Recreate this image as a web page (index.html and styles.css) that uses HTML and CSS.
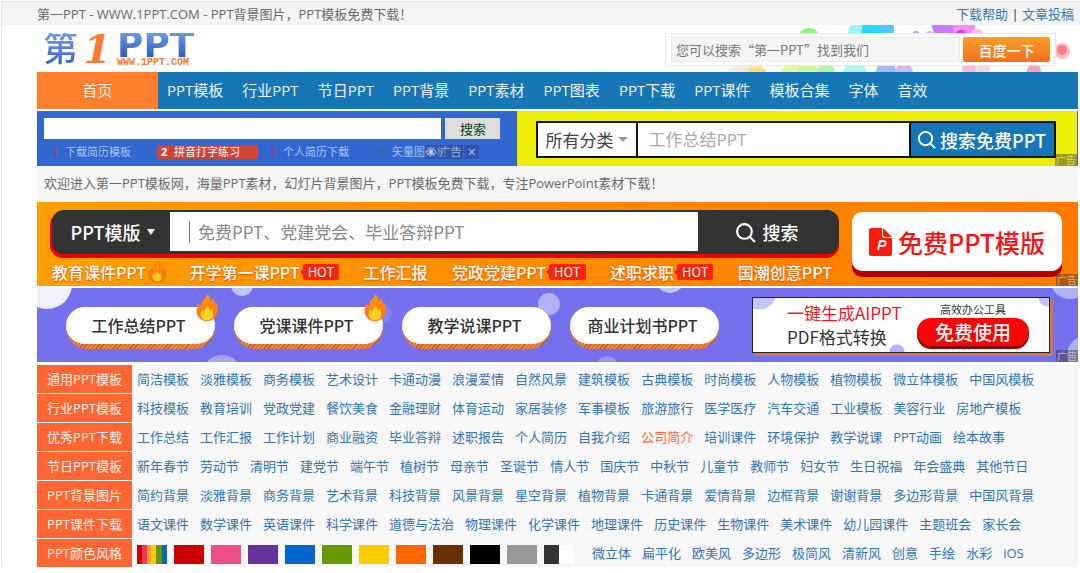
FILE: index.html
```
<!DOCTYPE html>
<html lang="zh-Hans">
<head>
  <meta charset="UTF-8">
  <title>第一PPT - PPT模板免费下载</title>
  <link rel="stylesheet" href="styles.css">
</head>
<body>
  <svg class="defs" width="0" height="0" aria-hidden="true">
    <defs>
      <linearGradient id="flameFill" x1="0" y1="0" x2="0" y2="1">
        <stop offset="0" stop-color="#ff9c00"/>
        <stop offset="1" stop-color="#ff6a1a"/>
      </linearGradient>
      <symbol id="flame" viewBox="0 0 24 30">
        <path fill="url(#flameFill)" d="M12 0c3 3 4 6 4 9 1-1 2-3 2-5 2 3 2 5 2 7l2-2c2 5 2 8 1 12-1 5-5 9-11 9S2 26 1 21c-1-4 0-7 2-10l2 4c0-4 1-6 3-8 2-2 4-4 4-7z"/>
        <path fill="#ffd21f" d="M13 13c1 3 2 4 2 6l2-3c2 3 2 5 2 7 0 4-3 6-7 6s-7-2-7-6c0-2 1-4 2-6l2 3c0-3 2-5 4-7z"/>
      </symbol>
      <symbol id="search" viewBox="0 0 20 20">
        <circle cx="9" cy="9" r="7" fill="none" stroke="currentColor" stroke-width="2"/>
        <path d="M14 14l5 5" stroke="currentColor" stroke-width="2"/>
      </symbol>
    </defs>
  </svg>

  <div class="topbar">
    <span>第一PPT - WWW.1PPT.COM - PPT背景图片，PPT模板免费下载！</span>
    <div class="topbar-links"><a href="#">下载帮助</a> | <a href="#">文章投稿</a></div>
  </div>

  <header>
    <a class="logo" href="#">
      <span class="logo-di">第</span>
      <span class="logo-one">1</span>
      <span class="logo-right">
        <span class="logo-ppt">PPT</span>
        <span class="logo-url">WWW.1PPT.COM</span>
      </span>
    </a>
    <svg class="bubbles" width="410" height="47" viewBox="-100 0 410 47" aria-hidden="true">
      <circle cx="39" cy="14" r="11" fill="#8df57d"/>
      <circle cx="90" cy="8" r="12" fill="#9ff5f3"/>
      <circle cx="108" cy="4" r="16" fill="#55c8fb"/>
      <circle cx="101" cy="8" r="10" fill="#25d8f5"/>
      <circle cx="146" cy="10" r="4" fill="#b5a5f5"/>
      <circle cx="160" cy="12" r="6" fill="#c9baf8"/>
      <circle cx="176" cy="0" r="14" fill="#c77dfb"/>
      <circle cx="194" cy="2" r="11" fill="#f68ef2"/>
      <circle cx="191" cy="11" r="6" fill="#f02be0"/>
      <circle cx="207" cy="11" r="7" fill="#f9c3dc"/>
      <circle cx="236" cy="14" r="5" fill="#fde6e6"/>
      <circle cx="292" cy="26" r="8" fill="#fdbcbc"/>
      <circle cx="292" cy="25" r="5" fill="#fb7d85"/>
      <ellipse cx="-30" cy="47" rx="12" ry="6" fill="#fbe9dc"/>
      <circle cx="-18" cy="49" r="8" fill="#fde6b0"/>
      <circle cx="-12" cy="50" r="9" fill="#ffe070"/>
      <circle cx="22" cy="52" r="13" fill="#e6f99a"/>
      <circle cx="38" cy="50" r="12" fill="#d0f99a"/>
      <circle cx="56" cy="47" r="9" fill="#b5f5b0"/>
      <circle cx="85" cy="49" r="12" fill="#aef5f3"/>
      <circle cx="116" cy="46" r="10" fill="#a9b5f8"/>
      <circle cx="134" cy="47" r="9" fill="#cdb8f8"/>
      <circle cx="199" cy="44" r="7" fill="#f8bcd0"/>
      <circle cx="213" cy="44" r="7" fill="#fbd5dc"/>
      <circle cx="264" cy="46" r="7" fill="#f8a5b5"/>
    </svg>
    <form class="baidu">
      <input type="text" aria-label="百度搜索" value="您可以搜索“第一PPT”找到我们">
      <button type="button">百度一下</button>
    </form>
  </header>

  <main>
    <nav class="nav">
      <a class="home" href="#">首页</a>
      <a href="#">PPT模板</a>
      <a href="#">行业PPT</a>
      <a href="#">节日PPT</a>
      <a href="#">PPT背景</a>
      <a href="#">PPT素材</a>
      <a href="#">PPT图表</a>
      <a href="#">PPT下载</a>
      <a href="#">PPT课件</a>
      <a href="#">模板合集</a>
      <a href="#">字体</a>
      <a href="#">音效</a>
    </nav>

    <div class="ads">
      <section class="ad-blue">
        <form class="ad-blue-form">
          <input type="text" aria-label="搜索">
          <button type="button">搜索</button>
        </form>
        <div class="hot-words">
          <a href="#"><b>1</b>下载简历模板</a>
          <a class="on" href="#"><b>2</b>拼音打字练习</a>
          <a href="#"><b>3</b>个人简历下载</a>
          <a href="#"><b class="green">4</b>矢量图素材</a>
        </div>
        <div class="ad-close">
          <svg width="12" height="12" viewBox="0 0 12 12" aria-hidden="true">
            <path d="M1 6c2-4 8-4 10 0-2 4-8 4-10 0z" fill="none" stroke="#c3d0f5"/>
            <circle cx="6" cy="6" r="2" fill="#c3d0f5"/>
          </svg>
          <span>广告</span>
          <button type="button" aria-label="关闭">✕</button>
        </div>
      </section>
      <section class="ad-yellow">
        <form class="yellow-form">
          <button class="yellow-type" type="button">所有分类<i class="caret"></i></button>
          <input type="text" aria-label="关键词" placeholder="工作总结PPT">
          <button class="yellow-go" type="button"><svg width="19" height="19"><use href="#search"/></svg>搜索免费PPT</button>
        </form>
        <span class="ad-mark">广告</span>
      </section>
    </div>

    <p class="welcome">欢迎进入第一PPT模板网，海量PPT素材，幻灯片背景图片，PPT模板免费下载，专注PowerPoint素材下载！</p>

    <section class="ad-orange">
      <div class="orange-main">
        <form class="orange-form">
          <button class="orange-type" type="button">PPT模版<i class="caret"></i></button>
          <div class="orange-input">
            <input type="text" aria-label="搜索模板" placeholder="免费PPT、党建党会、毕业答辩PPT">
          </div>
          <button class="orange-go" type="button"><svg width="21" height="21"><use href="#search"/></svg>搜索</button>
        </form>
        <div class="orange-links">
          <a href="#">教育课件PPT<svg width="16" height="20"><use href="#flame"/></svg></a>
          <a href="#">开学第一课PPT<span class="hot">HOT</span></a>
          <a href="#">工作汇报</a>
          <a href="#">党政党建PPT<span class="hot">HOT</span></a>
          <a href="#">述职求职<span class="hot">HOT</span></a>
          <a href="#">国潮创意PPT</a>
        </div>
      </div>
      <a class="free-btn" href="#">
        <svg width="23" height="28" viewBox="0 0 23 28" aria-hidden="true">
          <path d="M2 0h11v8c0 1 1 2 2 2h8v16c0 1-1 2-2 2H2c-1 0-2-1-2-2V2C0 1 1 0 2 0z" fill="#fa1b0a"/>
          <path d="M14 0l9 9h-7c-1 0-2-1-2-2z" fill="#fa1b0a"/>
          <path d="M9 22l2-9h3c4 0 3 5 0 5h-3" fill="none" stroke="#fff" stroke-width="2"/>
        </svg>
        免费PPT模版
      </a>
      <span class="ad-mark">广告</span>
    </section>

    <section class="ad-purple">
      <svg class="dots" width="1041" height="74" viewBox="0 0 1041 74" aria-hidden="true">
        <circle cx="10" cy="-4" r="25" fill="#f0f1fc"/>
        <circle cx="205" cy="-3" r="11" fill="#c3c2f8"/>
        <circle cx="185" cy="87" r="20" fill="#a9a7f5"/>
        <circle cx="346" cy="26" r="9" fill="#8683f0"/>
        <circle cx="512" cy="16" r="11" fill="#b3b1f8"/>
        <circle cx="633" cy="-10" r="15" fill="#c3c2f8"/>
        <circle cx="570" cy="79" r="11" fill="#9694f3"/>
        <circle cx="1033" cy="-9" r="20" fill="#b0b4f5"/>
        <circle cx="1049" cy="67" r="19" fill="#a5b5f5"/>
      </svg>
      <div class="pills">
        <a href="#">工作总结PPT<svg width="22" height="29"><use href="#flame"/></svg></a>
        <a href="#">党课课件PPT<svg width="22" height="29"><use href="#flame"/></svg></a>
        <a href="#">教学说课PPT</a>
        <a href="#">商业计划书PPT</a>
      </div>
      <div class="ai-box">
        <div class="ai-text">
          <span class="red">一键生成AIPPT</span>
          <span>PDF格式转换</span>
        </div>
        <div class="ai-action">
          <span>高效办公工具</span>
          <button type="button">免费使用</button>
        </div>
      </div>
      <span class="ad-mark">广告</span>
    </section>

    <div class="cats">
      <div class="row">
        <h2>通用PPT模板</h2>
        <div class="links">
          <a href="#">简洁模板</a><a href="#">淡雅模板</a><a href="#">商务模板</a><a href="#">艺术设计</a><a href="#">卡通动漫</a><a href="#">浪漫爱情</a><a href="#">自然风景</a><a href="#">建筑模板</a><a href="#">古典模板</a><a href="#">时尚模板</a><a href="#">人物模板</a><a href="#">植物模板</a><a href="#">微立体模板</a><a href="#">中国风模板</a>
        </div>
      </div>
      <div class="row">
        <h2>行业PPT模板</h2>
        <div class="links">
          <a href="#">科技模板</a><a href="#">教育培训</a><a href="#">党政党建</a><a href="#">餐饮美食</a><a href="#">金融理财</a><a href="#">体育运动</a><a href="#">家居装修</a><a href="#">军事模板</a><a href="#">旅游旅行</a><a href="#">医学医疗</a><a href="#">汽车交通</a><a href="#">工业模板</a><a href="#">美容行业</a><a href="#">房地产模板</a>
        </div>
      </div>
      <div class="row">
        <h2>优秀PPT下载</h2>
        <div class="links">
          <a href="#">工作总结</a><a href="#">工作汇报</a><a href="#">工作计划</a><a href="#">商业融资</a><a href="#">毕业答辩</a><a href="#">述职报告</a><a href="#">个人简历</a><a href="#">自我介绍</a><a class="active" href="#">公司简介</a><a href="#">培训课件</a><a href="#">环境保护</a><a href="#">教学说课</a><a href="#">PPT动画</a><a href="#">绘本故事</a>
        </div>
      </div>
      <div class="row">
        <h2>节日PPT模板</h2>
        <div class="links">
          <a href="#">新年春节</a><a href="#">劳动节</a><a href="#">清明节</a><a href="#">建党节</a><a href="#">端午节</a><a href="#">植树节</a><a href="#">母亲节</a><a href="#">圣诞节</a><a href="#">情人节</a><a href="#">国庆节</a><a href="#">中秋节</a><a href="#">儿童节</a><a href="#">教师节</a><a href="#">妇女节</a><a href="#">生日祝福</a><a href="#">年会盛典</a><a href="#">其他节日</a>
        </div>
      </div>
      <div class="row">
        <h2>PPT背景图片</h2>
        <div class="links">
          <a href="#">简约背景</a><a href="#">淡雅背景</a><a href="#">商务背景</a><a href="#">艺术背景</a><a href="#">科技背景</a><a href="#">风景背景</a><a href="#">星空背景</a><a href="#">植物背景</a><a href="#">卡通背景</a><a href="#">爱情背景</a><a href="#">边框背景</a><a href="#">谢谢背景</a><a href="#">多边形背景</a><a href="#">中国风背景</a>
        </div>
      </div>
      <div class="row">
        <h2>PPT课件下载</h2>
        <div class="links">
          <a href="#">语文课件</a><a href="#">数学课件</a><a href="#">英语课件</a><a href="#">科学课件</a><a href="#">道德与法治</a><a href="#">物理课件</a><a href="#">化学课件</a><a href="#">地理课件</a><a href="#">历史课件</a><a href="#">生物课件</a><a href="#">美术课件</a><a href="#">幼儿园课件</a><a href="#">主题班会</a><a href="#">家长会</a>
        </div>
      </div>
      <div class="row">
        <h2>PPT颜色风格</h2>
        <div class="swatches">
          <a class="multi" href="#" aria-label="彩色"></a>
          <a class="c-red" href="#" aria-label="红色"></a>
          <a class="c-pink" href="#" aria-label="粉色"></a>
          <a class="c-purple" href="#" aria-label="紫色"></a>
          <a class="c-blue" href="#" aria-label="蓝色"></a>
          <a class="c-green" href="#" aria-label="绿色"></a>
          <a class="c-yellow" href="#" aria-label="黄色"></a>
          <a class="c-orange" href="#" aria-label="橙色"></a>
          <a class="c-brown" href="#" aria-label="棕色"></a>
          <a class="c-black" href="#" aria-label="黑色"></a>
          <a class="c-gray" href="#" aria-label="灰色"></a>
          <a class="c-bw" href="#" aria-label="黑白"></a>
        </div>
        <div class="links">
          <a href="#">微立体</a><a href="#">扁平化</a><a href="#">欧美风</a><a href="#">多边形</a><a href="#">极简风</a><a href="#">清新风</a><a href="#">创意</a><a href="#">手绘</a><a href="#">水彩</a><a href="#">iOS</a>
        </div>
      </div>
    </div>
  </main>
</body>
</html>
```
FILE: styles.css
```
* {
  box-sizing: border-box;
}

body {
  margin: 1px 0 0 1px;
  border-top: 1px solid #e2e5e5;
  border-left: 1px solid #e5e5e5;
  background: #fff;
  color: #6a6a6a;
  font-family: "Open Sans", "Noto Sans CJK SC", sans-serif;
  font-size: 13px;
  line-height: 20px;
}

a {
  color: #3474b3;
  text-decoration: none;
}

input,
button {
  margin: 0;
  border: none;
  border-radius: 0;
  font-family: inherit;
}

input {
  min-width: 0;
  outline: none;
}

button {
  cursor: pointer;
  white-space: nowrap;
}

.defs {
  position: absolute;
}

/* top */
.topbar {
  display: flex;
  justify-content: space-between;
  height: 23px;
  padding: 2px 6px 0 35px;
  background: #f4f4f4;
}

.topbar-links {
  color: #333;
}

header {
  position: relative;
  display: flex;
  justify-content: space-between;
  height: 47px;
  padding: 8px 24px 0 41px;
}

.logo {
  display: flex;
  font-weight: 700;
}

.logo-di,
.logo-ppt {
  background: linear-gradient(#6d98e0, #2f5fbd);
  background-clip: text;
  -webkit-background-clip: text;
  color: transparent;
}

.logo-di {
  font-size: 35px;
  font-weight: 500;
  line-height: 30px;
}

.logo-one {
  width: 39px;
  color: #fa7a30;
  font-family: "DejaVu Serif", serif;
  font-size: 40px;
  font-style: italic;
  line-height: 32px;
  text-align: center;
}

.logo-right {
  display: flex;
  flex-direction: column;
}

.logo-ppt {
  font-family: "DejaVu Sans", sans-serif;
  font-size: 36px;
  line-height: 24px;
}

.logo-url {
  padding-top: 2px;
  color: #fa7a30;
  font-family: "Liberation Mono", monospace;
  font-size: 10px;
  line-height: 8px;
}

.bubbles {
  position: absolute;
  top: 0;
  right: 0;
  overflow: hidden;
}

.baidu {
  position: relative;
  display: flex;
  gap: 3px;
  width: 391px;
  height: 33px;
  padding: 3px 5px;
  border: 1px solid #e8e8e8;
  background: #fff;
}

.baidu input {
  flex: 1;
  padding: 0 4px;
  border: 1px solid #e9e9e9;
  background: #f4f4f4;
  color: #777;
  font-family: "Noto Sans CJK SC", sans-serif;
  font-size: 13px;
}

.baidu button {
  width: 87px;
  border-radius: 2px;
  background: linear-gradient(#fc9d2b, #f0701a);
  color: #fff;
  font-size: 14px;
  font-weight: 500;
}

main {
  padding: 0 2px 0 35px;
}

.nav {
  display: flex;
  gap: 19px;
  height: 37px;
  background: #1676b6;
  font-size: 15px;
  line-height: 37px;
}

.nav a {
  color: #edf5fa;
  white-space: nowrap;
}

.nav .home {
  width: 121px;
  margin-right: -10px;
  background: #ff7f2e;
  text-align: center;
}

/* banner ads */
.ads {
  display: grid;
  grid-template-columns: 6fr 7fr;
  height: 55px;
  margin-top: 2px;
}

.ad-blue {
  position: relative;
  padding: 7px 17px 0 7px;
  background: #3366d1;
}

.ad-blue-form {
  display: flex;
  gap: 4px;
  height: 21px;
}

.ad-blue-form input {
  flex: 1;
  background: #fff;
}

.ad-blue-form button {
  width: 55px;
  background: #ddd;
  color: #0c4012;
  font-size: 13px;
}

.hot-words {
  display: flex;
  gap: 8px;
  padding: 6px 0 0 4px;
  font-size: 11px;
  line-height: 14px;
}

.hot-words a {
  display: flex;
  width: 101px;
  padding-left: 4px;
  color: #a6c4f5;
  white-space: nowrap;
}

.hot-words b {
  width: 13px;
  color: #8f4a78;
}

.hot-words .green {
  color: #3f6a90;
}

.hot-words .on,
.hot-words .on b {
  background: #d04438;
  color: #fff;
}

.ad-close {
  position: absolute;
  right: 38px;
  bottom: 7px;
  display: flex;
  align-items: center;
  gap: 2px;
  height: 14px;
  background: rgba(40, 70, 140, 0.5);
  color: #9fb0dd;
  font-size: 11px;
}

.ad-close button {
  width: 16px;
  height: 14px;
  padding: 0;
  border-left: 1px solid #3f66c0;
  background: none;
  color: #a9b8e0;
  font-size: 11px;
  line-height: 14px;
}

.ad-yellow {
  position: relative;
  padding: 10px 21px 8px 19px;
  border-right: 1px solid #2a6fc0;
  background: #eeee05;
}

.yellow-form {
  display: flex;
  height: 37px;
  border: 2px solid #111;
  background: #fff;
  font-size: 17px;
}

.yellow-type {
  display: flex;
  align-items: center;
  gap: 5px;
  width: 100px;
  padding: 0 0 0 7px;
  border-right: 2px solid #111;
  background: #fff;
  color: #444;
  font-size: 17px;
}

.caret {
  border: 5px solid transparent;
  border-top-color: #999;
  border-bottom: 0;
}

.yellow-form input {
  flex: 1;
  padding: 0 10px;
  font-size: 17px;
}

.yellow-form input::placeholder {
  color: #aaa;
}

.yellow-go {
  display: flex;
  align-items: center;
  gap: 4px;
  width: 145px;
  padding: 0 6px;
  border-left: 2px solid #111;
  background: #1676b6;
  color: #fff;
  font-family: "Noto Sans CJK SC", sans-serif;
  font-size: 18px;
  font-weight: 500;
}

.ad-mark {
  position: absolute;
  right: 0;
  bottom: 0;
  height: 12px;
  padding: 0 1px;
  background: rgba(60, 50, 40, 0.45);
  color: rgba(255, 255, 255, 0.55);
  font-size: 10px;
  line-height: 12px;
}

.welcome {
  margin: 0;
  height: 36px;
  padding: 0 7px;
  background: #f5f5f5;
  line-height: 34px;
}

.ad-orange {
  position: relative;
  display: flex;
  gap: 13px;
  height: 84px;
  padding: 8px 16px 0 15px;
  background: linear-gradient(90deg, #ff9e00, #ff8a00 50%, #ff7a00);
  font-family: "Noto Sans CJK SC", sans-serif;
}

.orange-main {
  flex: 1;
}

.orange-form {
  display: flex;
  height: 44px;
  border-radius: 12px;
  background: #333;
  box-shadow: -1px 3px 0 1px #ea0000;
  color: #fff;
}

.orange-type,
.orange-go {
  display: flex;
  align-items: center;
  justify-content: center;
  gap: 7px;
  background: none;
  color: #fff;
  font-size: 18px;
  font-weight: 500;
}

.orange-type {
  width: 118px;
  padding: 0 4px 0 8px;
}

.orange-type .caret {
  border-width: 6px 4px 0;
  border-top-color: #fff;
}

.orange-go {
  width: 141px;
  padding: 0 10px 0 6px;
}

.orange-input {
  display: flex;
  flex: 1;
  align-items: center;
  margin: 2px 0 3px;
  padding-left: 19px;
  background: #fff;
}

.orange-input input {
  flex: 1;
  height: 22px;
  padding: 0 8px;
  border-left: 1px solid #777;
  font-size: 17px;
}

.orange-input input::placeholder {
  color: #888;
}

.orange-links {
  display: flex;
  justify-content: space-between;
  padding: 6px 7px 0 0;
  font-size: 16px;
  font-weight: 500;
  line-height: 24px;
}

.orange-links a {
  display: flex;
  align-items: center;
  gap: 3px;
  color: #fff;
  text-shadow: 0 1px 2px #d84a00;
  white-space: nowrap;
}

.orange-links svg {
  flex: none;
  filter: drop-shadow(0 0 1px #e03c00);
}

.hot {
  position: relative;
  padding: 0 5px;
  border-radius: 2px;
  background: #fb2210;
  font-size: 13px;
  font-weight: 400;
  line-height: 16px;
  text-shadow: none;
}

.hot::before {
  content: "";
  position: absolute;
  top: 5px;
  left: -3px;
  border: 3px solid transparent;
  border-right-color: #fb2210;
  border-left: 0;
}

.free-btn {
  display: flex;
  align-items: center;
  justify-content: center;
  gap: 6px;
  width: 210px;
  height: 59px;
  margin-top: 2px;
  border-radius: 10px;
  background: #fff;
  box-shadow: 0 6px 0 #b50000;
  color: #f81414;
  font-size: 25px;
  font-weight: 500;
  white-space: nowrap;
}

.ad-purple {
  position: relative;
  display: flex;
  justify-content: space-between;
  height: 74px;
  margin-top: 2px;
  padding: 9px 28px 0 29px;
  background: #7470ee;
  font-family: "Noto Sans CJK SC", sans-serif;
}

.dots {
  position: absolute;
  top: 0;
  left: 0;
  width: 100%;
  overflow: hidden;
}

.pills {
  position: relative;
  display: flex;
  gap: 19px;
  padding-top: 10px;
}

.pills a {
  position: relative;
  width: 149px;
  height: 42px;
  padding-right: 4px;
  border-radius: 21px;
  background: repeating-linear-gradient(135deg, #f0843c 0 2px, #b5623c 2px 3px);
  color: #333;
  font-size: 16px;
  font-weight: 500;
  line-height: 37px;
  text-align: center;
  z-index: 0;
}

/* white face of the pill, the hatched edge shows below it */
.pills a::before {
  content: "";
  position: absolute;
  inset: 0 0 5px;
  border-radius: 19px;
  background: #fff;
  z-index: -1;
}

.pills svg {
  position: absolute;
  top: -14px;
  right: -3px;
}

.ai-box {
  position: relative;
  display: flex;
  justify-content: space-between;
  width: 298px;
  height: 56px;
  padding: 3px 20px 0 34px;
  border: 1px solid #222;
  background:
    radial-gradient(circle at 6px -6px, #c5c4f8 17px, transparent 18px),
    radial-gradient(circle at 295px -1px, #c5c4f8 9px, transparent 10px),
    radial-gradient(circle at 144px 54px, #b5b3f5 7px, transparent 8px),
    #fff;
  box-shadow: 3px 3px 0 #d0784a;
  color: #333;
}

.ai-text {
  display: flex;
  flex-direction: column;
  font-size: 17px;
  line-height: 24px;
}

.red {
  color: #f01818;
}

.ai-action {
  display: flex;
  flex-direction: column;
  align-items: center;
  font-size: 11px;
  line-height: 17px;
}

.ai-action button {
  width: 112px;
  height: 28px;
  border-radius: 14px;
  background: #f80505;
  box-shadow: 0 3px 0 #8a0a10;
  color: #fff;
  font-size: 19px;
  font-weight: 500;
  line-height: 26px;
}

/* category list */
.cats {
  display: grid;
  gap: 1px;
  margin-top: 3px;
  background: linear-gradient(90deg, #fff 95px, #f7f7f7 95px);
}

.row {
  display: flex;
  align-items: center;
  height: 28px;
}

.row h2 {
  width: 95px;
  margin: 0;
  background: #ff6633;
  color: #fff3ee;
  font-size: 13px;
  font-weight: 400;
  line-height: 28px;
  text-align: center;
}

.links {
  display: flex;
  gap: 11px;
  padding-left: 5px;
  white-space: nowrap;
}

.links .active {
  color: #ff6633;
}

.swatches {
  display: flex;
  gap: 7px;
  padding: 3px 13px 0 5px;
}

.swatches a {
  width: 30px;
  height: 19px;
}

.multi {
  background: linear-gradient(90deg, #c00 0 5px, #f0355a 5px 10px, #f93 10px 14px, #fc0 14px 19px, #690 19px 25px, #06c 25px);
}

.c-red { background: #c00; }
.c-pink { background: #ea4f88; }
.c-purple { background: #639; }
.c-blue { background: #06c; }
.c-green { background: #690; }
.c-yellow { background: #fc0; }
.c-orange { background: #f60; }
.c-brown { background: #630; }
.c-black { background: #000; }
.c-gray { background: #999; }
.c-bw { background: linear-gradient(90deg, #333 50%, #fff 50%); }
```
